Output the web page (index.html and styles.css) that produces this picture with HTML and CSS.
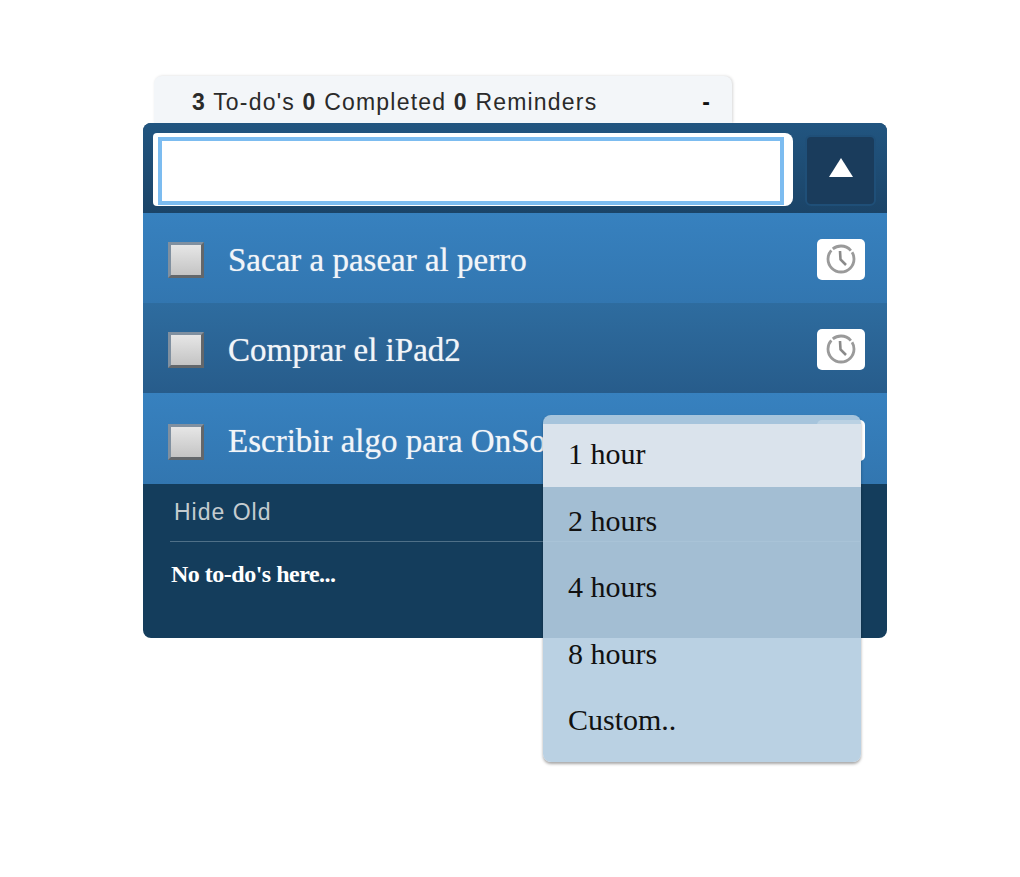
FILE: index.html
```html
<!DOCTYPE html>
<html lang="en">
<head>
    <meta charset="UTF-8">
    <title>To-do's</title>
    <link rel="stylesheet" href="styles.css">
</head>
<body>
    <div class="widget">
        <div class="summary">
            <span><b>3</b> To-do's <b>0</b> Completed <b>0</b> Reminders</span>
            <span class="collapse">-</span>
        </div>
        <div class="panel">
            <div class="add-bar">
                <div class="add-field"><input type="text" class="add-input"></div>
                <button class="toggle"><span class="arrow"></span></button>
            </div>
            <div class="todo">
                <span class="check"></span>
                <span class="todo-text">Sacar a pasear al perro</span>
                <button class="remind">
                    <svg viewBox="0 0 32 32" width="32" height="32"><circle cx="16" cy="16" r="13" fill="none" stroke="#9a9a9a" stroke-width="2.8" stroke-dasharray="50 2 20 2 8 1"/><path d="M15 8 L15.5 16.5 L21 22" fill="none" stroke="#8a8a8a" stroke-width="2.6"/></svg>
                </button>
            </div>
            <div class="todo dark">
                <span class="check"></span>
                <span class="todo-text">Comprar el iPad2</span>
                <button class="remind">
                    <svg viewBox="0 0 32 32" width="32" height="32"><circle cx="16" cy="16" r="13" fill="none" stroke="#9a9a9a" stroke-width="2.8" stroke-dasharray="50 2 20 2 8 1"/><path d="M15 8 L15.5 16.5 L21 22" fill="none" stroke="#8a8a8a" stroke-width="2.6"/></svg>
                </button>
            </div>
            <div class="todo last">
                <span class="check"></span>
                <span class="todo-text">Escribir algo para OnSoftware</span>
                <button class="remind"></button>
            </div>
            <div class="old">
                <div class="old-title">Hide Old</div>
                <div class="old-empty">No to-do's here...</div>
            </div>
            <ul class="menu">
                <li class="active">1 hour</li>
                <li>2 hours</li>
                <li>4 hours</li>
                <li>8 hours</li>
                <li>Custom..</li>
            </ul>
        </div>
    </div>
</body>
</html>
```
FILE: styles.css
```css
* {
    margin: 0;
    padding: 0;
    box-sizing: border-box;
}

body {
    min-height: 100vh;
    background: #ffffff;
    font-family: "Liberation Sans", Arial, sans-serif;
    padding: 76px 0 0 143px;
}

.widget {
    width: 744px;
}

/* Tab above the panel */
.summary {
    display: flex;
    justify-content: space-between;
    align-items: center;
    width: 578px;
    height: 47px;
    margin-left: 11px;
    padding: 16px 21px 10px 38px;
    background: #f3f6f9;
    border-radius: 8px 8px 0 0;
    box-shadow: 1px 0 3px rgba(0, 0, 0, 0.16);
    color: #2a2a2a;
    font-size: 23px;
    letter-spacing: 1.2px;
}

.summary span {
    white-space: pre;
}

.collapse {
    font-weight: bold;
    color: #111111;
}

.panel {
    position: relative;
    background: #143d5c;
    border-radius: 8px;
}

.add-bar {
    display: flex;
    justify-content: space-between;
    align-items: flex-start;
    height: 90px;
    padding: 10px 11px 0 10px;
    background: linear-gradient(#215580, #1b4468);
    border-radius: 8px 8px 0 0;
}

.add-field {
    width: 640px;
    height: 73px;
    padding: 4px 9px 1px 5px;
    background: #ffffff;
    border-radius: 4px 8px 8px 4px;
}

.add-input {
    display: block;
    width: 100%;
    height: 100%;
    border: 4px solid #7cbcf0;
    background: #ffffff;
    outline: none;
}

.toggle {
    display: flex;
    justify-content: center;
    align-items: center;
    width: 71px;
    height: 71px;
    margin-top: 2px;
    background: #1a3c5c;
    border: 2px solid #1f4f78;
    border-radius: 6px;
}

.arrow {
    width: 0;
    height: 0;
    margin-bottom: 6px;
    border-left: 12px solid transparent;
    border-right: 12px solid transparent;
    border-bottom: 19px solid #ffffff;
}

.todo {
    display: flex;
    align-items: center;
    height: 90px;
    padding: 0 22px 0 25px;
    background: linear-gradient(#3781bf, #3276b0);
}

.todo.dark {
    background: linear-gradient(#2e6c9f, #275c8b);
}

.todo.last {
    height: 91px;
    padding-top: 2px;
}

.check {
    flex: none;
    width: 36px;
    height: 36px;
    margin-top: 4px;
    background: linear-gradient(#e6e6e6, #c4c4c4);
    border: 3px solid #63676b;
    border-top-color: #8090a0;
    border-left-color: #8090a0;
}

.todo-text {
    flex: none;
    margin: 4px 0 0 24px;
    color: #f2f5f8;
    font-family: "Liberation Serif", Georgia, serif;
    font-size: 33px;
    text-shadow: 0 0 1px rgba(255, 255, 255, 0.6);
    white-space: nowrap;
}

.remind {
    display: flex;
    justify-content: center;
    align-items: center;
    flex: none;
    width: 48px;
    height: 41px;
    margin: 2px 0 0 auto;
    background: #ffffff;
    border: none;
    border-radius: 5px;
}

.old {
    height: 154px;
    padding: 15px 27px 0 28px;
}

.old-title {
    height: 43px;
    margin-left: -1px;
    padding: 0 0 0 4px;
    border-bottom: 1px solid #4f7088;
    color: #c5ccd0;
    font-size: 23px;
    letter-spacing: 1px;
}

.old-empty {
    margin-top: 19px;
    color: #ffffff;
    font-family: "Liberation Serif", Georgia, serif;
    font-size: 24px;
    font-weight: bold;
    letter-spacing: -0.5px;
}

/* Reminder dropdown */
.menu {
    position: absolute;
    top: 292px;
    left: 400px;
    width: 318px;
    padding-top: 9px;
    list-style: none;
    background: rgba(178, 204, 224, 0.9);
    border-radius: 8px;
    box-shadow: 0 2px 3px rgba(0, 0, 0, 0.35);
    color: #111111;
    font-family: "Liberation Serif", Georgia, serif;
    font-size: 30px;
}

.menu li {
    height: 66.4px;
    padding: 17px 25px 0;
}

.menu li:last-child {
    height: 76px;
}

.menu li.active {
    height: 63px;
    padding-top: 13px;
    background: #dae3ec;
}
```
